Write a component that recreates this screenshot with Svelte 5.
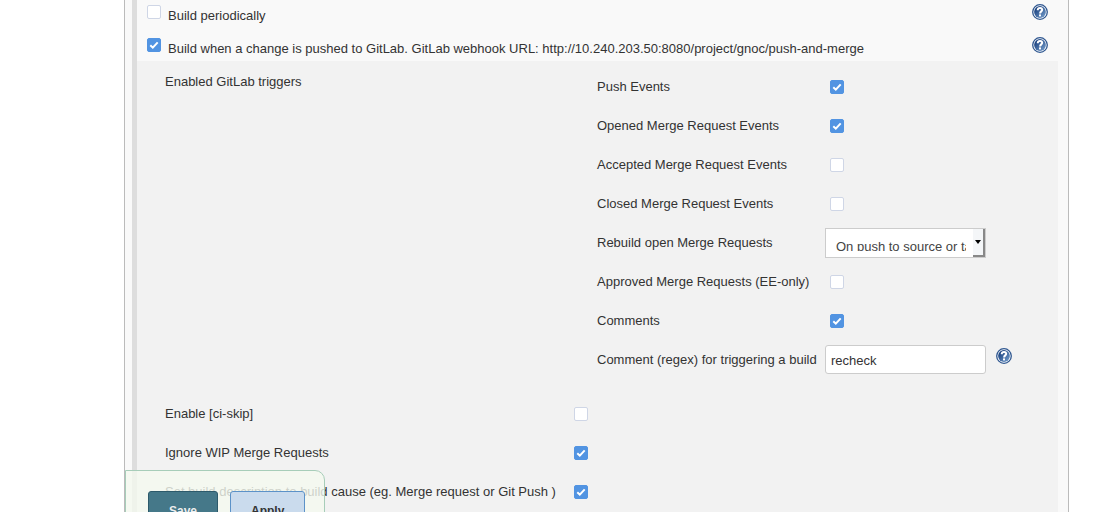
<script>
  const triggers = [
    { id: 'push', label: 'Push Events', kind: 'check', checked: true },
    { id: 'opened', label: 'Opened Merge Request Events', kind: 'check', checked: true },
    { id: 'accepted', label: 'Accepted Merge Request Events', kind: 'check', checked: false },
    { id: 'closed', label: 'Closed Merge Request Events', kind: 'check', checked: false },
    { id: 'rebuild', label: 'Rebuild open Merge Requests', kind: 'select' },
    { id: 'approved', label: 'Approved Merge Requests (EE-only)', kind: 'check', checked: false },
    { id: 'comments', label: 'Comments', kind: 'check', checked: true },
    { id: 'regex', label: 'Comment (regex) for triggering a build', kind: 'text' }
  ];
  const options = [
    { id: 'ci-skip', label: 'Enable [ci-skip]', checked: false },
    { id: 'wip', label: 'Ignore WIP Merge Requests', checked: true },
    { id: 'description', label: 'Set build description to build cause (eg. Merge request or Git Push )', checked: true }
  ];
</script>

{#snippet help()}
  <button type="button" class="help" aria-label="Help">
    <svg viewBox="0 0 16 16" width="16" height="16" aria-hidden="true">
      <defs>
        <linearGradient id="helpFill" x1="0" y1="0" x2="1" y2="1">
          <stop offset="0.2" stop-color="#1f4683" />
          <stop offset="1" stop-color="#7ba3d0" />
        </linearGradient>
      </defs>
      <circle cx="8" cy="8" r="7.3" fill="#fff" stroke="#2f5790" stroke-width="1.3" />
      <circle cx="8" cy="8" r="5.9" fill="url(#helpFill)" />
      <path d="M5.8 6.3V5.6C5.8 3.3 10.2 3.3 10.2 5.8C10.2 7.4 8.1 7.4 8.1 9.4" fill="none" stroke="#fff" stroke-width="2" />
      <rect x="7" y="10.4" width="2" height="2" fill="#fff" />
    </svg>
  </button>
{/snippet}

<main class="page">
  <form class="panel">
    <div class="block">
      <div class="trigger">
        <input id="periodic" type="checkbox" />
        <label for="periodic">Build periodically</label>
        {@render help()}
      </div>
      <div class="trigger">
        <input id="gitlab" type="checkbox" checked />
        <label for="gitlab">Build when a change is pushed to GitLab. GitLab webhook URL: http://10.240.203.50:8080/project/gnoc/push-and-merge</label>
        {@render help()}
      </div>

      <section class="settings">
        <div class="events">
          <div class="heading">Enabled GitLab triggers</div>
          <div class="list">
            {#each triggers as item (item.id)}
              <div class="row">
                <label for={item.id}>{item.label}</label>
                {#if item.kind === 'check'}
                  <input class="inset" id={item.id} type="checkbox" checked={item.checked} />
                {:else if item.kind === 'select'}
                  <div class="select">
                    <select id={item.id}>
                      <option>On push to source or target branch</option>
                      <option>Never</option>
                      <option>On push to source branch</option>
                    </select>
                    <span class="arrow"></span>
                  </div>
                {:else}
                  <input id={item.id} type="text" value="recheck" />
                  {@render help()}
                {/if}
              </div>
            {/each}
          </div>
        </div>
        {#each options as item (item.id)}
          <div class="option">
            <label for={item.id}>{item.label}</label>
            <input type="checkbox" id={item.id} checked={item.checked} />
          </div>
        {/each}
      </section>
    </div>
  </form>

  <div class="actions">
    <button type="button" class="save">Save</button>
    <button type="button" class="apply">Apply</button>
  </div>
</main>

<style>
  :global(body) {
    margin: 0;
    background: #fff;
  }
  .page {
    box-sizing: border-box;
    display: flex;
    min-height: 100vh;
    padding: 0 48px 0 124px;
    font: 13px/18px "Liberation Sans", Arial, sans-serif;
    color: #333;
  }
  .panel {
    box-sizing: border-box;
    display: flex;
    flex: 1;
    min-width: 0;
    padding: 0 10px 0 7px;
    border: solid #bbb;
    border-width: 0 1px;
    background: #f9f9f9;
  }
  .block {
    flex: 1;
    display: flex;
    flex-direction: column;
    border-left: 5px solid #ddd;
  }
  input[type='checkbox'] {
    appearance: none;
    box-sizing: border-box;
    flex: none;
    width: 14px;
    height: 14px;
    margin: 0;
    border: 1px solid #cfd6e6;
    border-radius: 2px;
    background: #fff;
  }
  input[type='checkbox']:checked {
    border-color: #5294e2;
    background: #5294e2 url("data:image/svg+xml,%3Csvg xmlns='http://www.w3.org/2000/svg' viewBox='0 0 12 12'%3E%3Cpath d='M2.3 6.2 4.8 8.6 9.7 3.4' fill='none' stroke='white' stroke-width='2'/%3E%3C/svg%3E") center / 12px 12px;
  }
  .trigger {
    display: flex;
    align-items: flex-start;
    height: 28px;
    padding: 5px 10px 0;
  }
  .trigger label {
    flex: 1;
    padding: 2px 0 0 7px;
  }
  .trigger + .trigger {
    height: 23px;
  }
  .help {
    display: flex;
    flex: none;
    padding: 0;
    border: 0;
    background: none;
  }
  .trigger .help {
    margin-top: -1px;
  }
  .settings {
    flex: 1;
    padding: 6px 0 0 28px;
    background: #f2f2f2;
  }
  .events {
    display: grid;
    grid-template-columns: 432px 1fr;
    margin-bottom: 15px;
  }
  .heading {
    padding-top: 6px;
  }
  .row {
    display: grid;
    grid-template-columns: 228px 161px auto;
    justify-content: start;
    align-items: center;
    height: 39px;
  }
  .inset {
    justify-self: start;
  }
  .row .inset {
    margin-left: 5px;
  }
  .row .help {
    margin: 0 0 8px 10px;
  }
  input[type='text'] {
    box-sizing: border-box;
    width: 100%;
    height: 29px;
    margin: 0;
    padding: 2px 5px 0;
    border: 1px solid #ccc;
    border-radius: 3px;
    background: #fff;
    color: #333;
    font: inherit;
  }
  .select {
    box-sizing: border-box;
    display: flex;
    justify-content: space-between;
    height: 30px;
    padding: 0 0 0 10px;
    border: 1px solid #ccc;
    background: #fff;
  }
  select {
    appearance: none;
    box-sizing: border-box;
    width: 130px;
    height: 16px;
    margin: 6px 0 0;
    padding: 3px 0 0;
    border: 0;
    overflow: clip;
    background: none;
    color: #444;
    font: inherit;
  }
  .arrow {
    box-sizing: border-box;
    display: flex;
    align-items: center;
    justify-content: center;
    width: 12px;
    border: solid #888;
    border-width: 0 2px 2px 0;
    background: #f4f6f8;
    pointer-events: none;
  }
  .arrow::before {
    content: '';
    border: 3px solid transparent;
    border-top: 4px solid #000;
    border-bottom: 0;
  }
  .option {
    display: grid;
    grid-template-columns: 409px auto;
    justify-content: start;
    align-items: center;
    height: 39px;
  }
  .actions {
    position: fixed;
    bottom: -32px;
    left: 125px;
    box-sizing: border-box;
    display: flex;
    gap: 12px;
    height: 74px;
    padding: 20px 19px 0 22px;
    border: 1px solid #a7cdb9;
    border-radius: 0 10px 0 0;
    background: rgba(244, 249, 239, 0.8);
  }
  .actions button {
    height: 40px;
    padding: 0 20px;
    border: 1px solid #2d5a6b;
    border-radius: 3px;
    background: #457889;
    color: #eee;
    font: bold 12px/18px "Liberation Sans", Arial, sans-serif;
  }
  .actions .apply {
    border-color: #5c92c8;
    background: #cadbed;
    color: #333;
  }
</style>
